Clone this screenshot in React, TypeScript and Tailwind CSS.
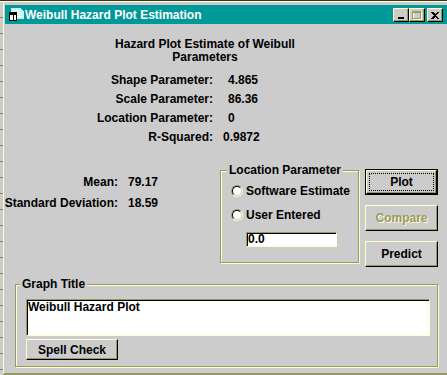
const raised =
  "border border-t-[#ffffcc] border-l-[#ffffcc] border-r-black border-b-black shadow-[inset_-1px_-1px_0_#999966] bg-[#cccccc]";
const sunken =
  "border border-t-[#999966] border-l-[#999966] border-r-[#ffffcc] border-b-[#ffffcc] shadow-[inset_1px_1px_0_#000000] bg-white";
const etched = "border border-[#999966] shadow-[inset_1px_1px_0_#ffffcc,1px_1px_0_#ffffcc]";

function Radio({ label }: { label: string }) {
  return (
    <div className="flex items-center h-[16px] gap-[3px]">
      <div className="w-[12px] h-[12px] rounded-full border border-t-[#999966] border-l-[#999966] border-r-[#ffffcc] border-b-[#ffffcc]">
        <div className="w-full h-full rounded-full border border-t-black border-l-black border-r-[#cccccc] border-b-[#cccccc] bg-white" />
      </div>
      <span>{label}</span>
    </div>
  );
}

function TitleIcon() {
  return (
    <svg width="16" height="16" viewBox="0 0 16 16" shapeRendering="crispEdges" className="w-[16px] h-[16px] max-w-none">
      <path d="M3 1h10l3 4v7H6L3 7z" fill="#bff2f2" />
      <path d="M5 3h8M6 5h8M7 7h8M8 9h7" stroke="#ffffff" />
      <rect x="1.5" y="5.5" width="7" height="8" fill="#ffffff" stroke="#000000" />
      <rect x="2" y="6" width="6" height="2" fill="#000000" />
      <path d="M5 8v5" stroke="#000000" />
    </svg>
  );
}

function CaptionButton({ children }: { children: React.ReactNode }) {
  return (
    <div className={`w-[16px] h-[14px] flex items-center justify-center ${raised}`}>{children}</div>
  );
}

export default function App() {
  return (
    <div className="w-[447px] h-[375px] overflow-hidden bg-[#cccccc] flex flex-col text-[12px] font-bold text-black font-['Liberation_Sans',Arial,sans-serif]">
      <div className="h-px bg-[#333333]" />
      <div className="h-px bg-[#ffffcc]" />
      <div className="flex flex-1 min-h-0">
        {/* window behind */}
        <div className="w-[3px] bg-[#cccccc] bg-[image:repeating-linear-gradient(to_bottom,#cccccc_0px,#cccccc_15px,#808080_15px,#808080_16px)]" />
        <div className="flex-1 flex flex-col border-l border-[#ffffcc] border-b-2 border-b-[#999966] pt-[3px]">
          {/* Title bar */}
          <div className="ml-px h-[19px] bg-[#009999] flex items-start text-white">
            <div className="ml-[3px] mt-[2px] w-[16px] shrink-0">
              <TitleIcon />
            </div>
            <span className="ml-px leading-[20px]">Weibull Hazard Plot Estimation</span>
            <div className="ml-auto mr-[4px] mt-[3px] flex">
              <CaptionButton>
                <div className="w-[6px] h-[2px] bg-black mt-[6px] -ml-[1px]" />
              </CaptionButton>
              <CaptionButton>
                <svg width="10" height="9" viewBox="0 0 10 9" shapeRendering="crispEdges">
                  <rect x="1.5" y="1.5" width="8" height="7" fill="none" stroke="#ffffcc" />
                  <rect x="0.5" y="0.5" width="8" height="7" fill="none" stroke="#999966" />
                  <path d="M1 1.5h7" stroke="#999966" />
                </svg>
              </CaptionButton>
              <div className="ml-[2px]">
                <CaptionButton>
                  <svg width="8" height="7" viewBox="0 0 8 7" shapeRendering="crispEdges">
                    <path d="M0 0h2l2 2 2-2h2L5 3.5 8 7H6L4 5 2 7H0l3-3.5z" fill="#000000" />
                  </svg>
                </CaptionButton>
              </div>
            </div>
          </div>

          {/* Content */}
          <div className="flex-1 flex flex-col">
            <div className="mt-[14px] ml-[101px] w-[200px] text-center leading-[13px]">
              Hazard Plot Estimate of Weibull
              <br />
              Parameters
            </div>

            <div className="mt-[7px] grid grid-cols-[209px_auto] gap-x-[15px] auto-rows-[19px] leading-[19px]">
              <span className="text-right">Shape Parameter:</span>
              <span>4.865</span>
              <span className="text-right">Scale Parameter:</span>
              <span>86.36</span>
              <span className="text-right">Location Parameter:</span>
              <span>0</span>
              <span className="text-right">R-Squared:</span>
              <span className="-ml-[5px]">0.9872</span>
            </div>

            {/* Middle section */}
            <div className="mt-[22px] flex items-start">
              <div className="w-[216px] mt-[3px] grid grid-cols-[114px_auto] gap-x-[10px] auto-rows-[21px] leading-[21px]">
                <span className="text-right">Mean:</span>
                <span>79.17</span>
                <span className="text-right">Standard Deviation:</span>
                <span>18.59</span>
              </div>

              <div className={`relative mt-px w-[139px] h-[93px] ${etched}`}>
                <span className="absolute left-[6px] -top-[8px] h-[14px] leading-[14px] px-[2px] bg-[#cccccc]">
                  Location Parameter
                </span>
                <div className="pt-[12px] pl-[10px] flex flex-col gap-[8px]">
                  <Radio label="Software Estimate" />
                  <Radio label="User Entered" />
                </div>
                <div className={`mt-[9px] ml-[25px] w-[91px] h-[15px] leading-[12px] ${sunken}`}>
                  <span className="pl-px">0.0</span>
                </div>
              </div>

              <div className="ml-[6px] flex flex-col gap-[10px]">
                <div className="w-[73px] h-[26px] border border-black">
                  <div className={`w-full h-full p-[2px] ${raised}`}>
                    <div className="w-full h-full border border-dotted border-black flex items-center justify-center">
                      Plot
                    </div>
                  </div>
                </div>
                <div
                  className={`w-[73px] h-[26px] flex items-center justify-center text-[#999966] [text-shadow:1px_1px_0_#ffffcc] ${raised}`}
                >
                  Compare
                </div>
                <div className={`w-[73px] h-[26px] flex items-center justify-center ${raised}`}>Predict</div>
              </div>
            </div>

            {/* Graph Title */}
            <div className={`relative mt-[17px] ml-[11px] w-[423px] h-[83px] ${etched}`}>
              <span className="absolute left-[4px] -top-[8px] h-[14px] leading-[14px] px-[2px] bg-[#cccccc]">
                Graph Title
              </span>
              <div className="pt-[14px] pl-[10px]">
                <div className={`w-[404px] h-[37px] leading-[14px] ${sunken}`}>
                  <span className="pl-px">Weibull Hazard Plot</span>
                </div>
                <div className={`mt-[3px] w-[92px] h-[21px] flex items-center justify-center ${raised}`}>
                  Spell Check
                </div>
              </div>
            </div>
          </div>
        </div>
      </div>
    </div>
  );
}
